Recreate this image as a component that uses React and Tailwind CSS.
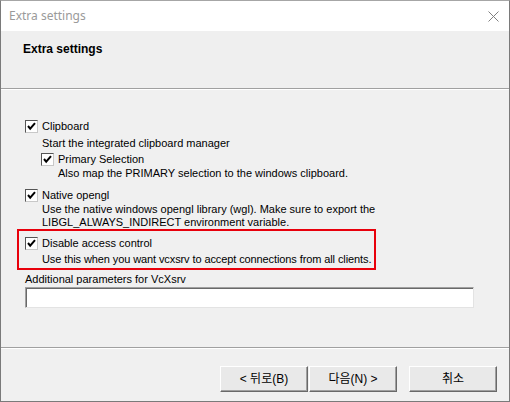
import React from 'react'

function Check({ className = '' }) {
  return (
    <span className={`mt-[1px] flex h-[13px] w-[13px] shrink-0 items-center justify-center border border-t-[#555] border-l-[#555] border-r-[#c8c8c8] border-b-[#c8c8c8] bg-white ${className}`}>
      <svg width="9" height="9" viewBox="0 0 9 9">
        <path d="M1 4 L3.2 6.6 L8 1.2" fill="none" stroke="#000" strokeWidth="2" />
      </svg>
    </span>
  )
}

function Option({ label, children }) {
  return (
    <div className='flex flex-row gap-[4px]'>
      <Check />
      <div className='whitespace-nowrap'>
        <p className='leading-[14px] text-black'>{label}</p>
        {children}
      </div>
    </div>
  )
}

function Button({ children, className = '' }) {
  return (
    <button className={`h-[26px] w-[88px] border border-t-white border-l-white border-r-[#696969] border-b-[#696969] bg-[#e9e9e9] text-[12px] text-black shadow-[inset_-1px_-1px_0_#a0a0a0] ${className}`}>
      {children}
    </button>
  )
}

export default function App() {
  return (
    <div className='flex h-[402px] w-[510px] flex-col border border-[#7a7a7a] border-t-[#a6a6a6] bg-[#f0f0f0] font-["Liberation_Sans","Noto_Sans_CJK_KR",sans-serif] text-[11px]'>

      {/* title bar */}
      <div className='flex h-[30px] shrink-0 flex-row items-center justify-between bg-white pl-[8px] pr-[10px]'>
        <span className='font-["Noto_Sans",sans-serif] text-[12px] text-[#9a9a9a]'>Extra settings</span>
        <svg width="11" height="11" viewBox="0 0 11 11">
          <path d="M0.5 0.5 L10.5 10.5 M10.5 0.5 L0.5 10.5" stroke="#808080" strokeWidth="1" />
        </svg>
      </div>

      {/* header */}
      <div className='h-[58px] shrink-0 border-b border-b-[#a0a0a0] bg-[#efefef] pl-[22px] pt-[11px]'>
        <h1 className='text-[12px] font-bold leading-[14px] text-black'>Extra settings</h1>
      </div>

      {/* content */}
      <div className='flex flex-1 flex-col border-t border-t-white pl-[24px] pt-[29px]'>
        <Option label='Clipboard'>
          <p className='mt-[3px] leading-[14px]'>Start the integrated clipboard manager</p>
          <div className='mt-[2px] -ml-[1px]'>
            <Option label='Primary Selection'>
              <p className='leading-[14px]'>Also map the PRIMARY selection to the windows clipboard.</p>
            </Option>
          </div>
        </Option>

        <div className='mt-[8px]'>
          <Option label='Native opengl'>
            <p className='mt-[1px] leading-[13px]'>Use the native windows opengl library (wgl). Make sure to export the</p>
            <p className='leading-[13px]'>LIBGL_ALWAYS_INDIRECT environment variable.</p>
          </Option>
        </div>

        <div className='mt-[0px] -ml-[8px] w-[359px] border-2 border-[#e8000b] pb-[2px] pl-[6px] pt-[5px]'>
          <Option label='Disable access control'>
            <p className='mt-[2px] leading-[14px] tracking-[-0.1px]'>Use this when you want vcxsrv to accept connections from all clients.</p>
          </Option>
        </div>

        <p className='mt-[2px] leading-[14px] text-black'>Additional parameters for VcXsrv</p>
        <div className='mt-[1px] h-[21px] w-[449px] border border-t-[#a0a0a0] border-l-[#a0a0a0] border-r-[#e3e3e3] border-b-[#e3e3e3] bg-white shadow-[inset_1px_1px_0_#696969]' />
      </div>

      {/* footer */}
      <div className='flex h-[54px] shrink-0 flex-row items-start justify-end border-t border-t-[#a0a0a0] pr-[12px] pt-[18px] shadow-[inset_0_1px_0_#ffffff]'>
        <Button>&lt; 뒤로(B)</Button>
        <Button className='ml-[1px]'>다음(N) &gt;</Button>
        <Button className='ml-[12px]'>취소</Button>
      </div>
    </div>
  )
}
